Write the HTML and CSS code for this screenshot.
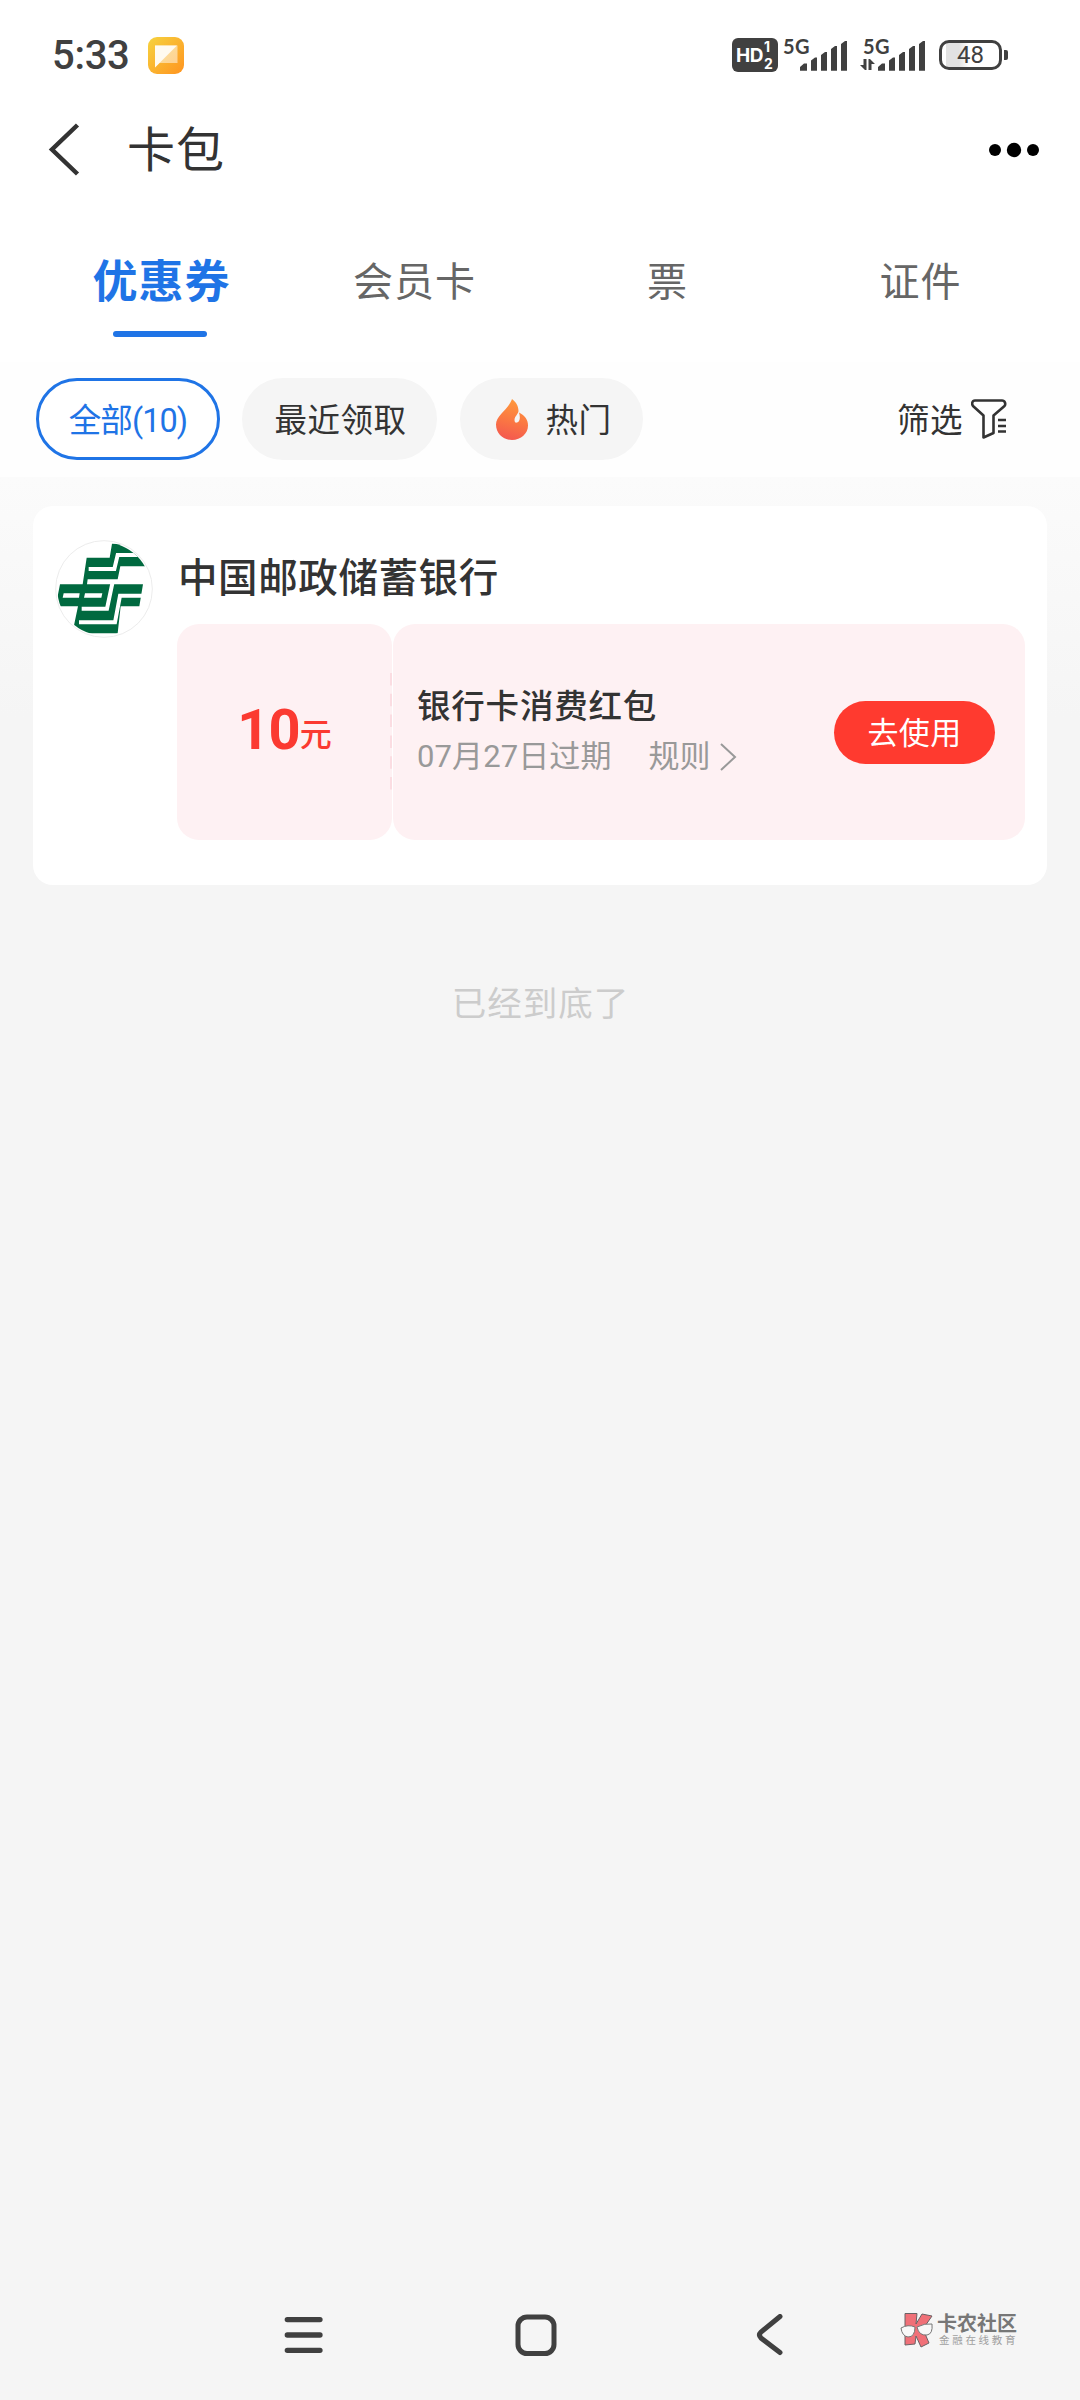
FILE: index.html
```html
<!DOCTYPE html>
<html lang="zh-CN">
<head>
<meta charset="utf-8">
<title>卡包</title>
<link rel="stylesheet" href="styles.css">
</head>
<body>
<div class="screen">
  <header class="status">
    <span class="clock">5:33</span>
    <svg class="note" width="36" height="37" viewBox="0 0 36 37">
      <defs>
        <linearGradient id="noteBg" x1="0" y1="0" x2="1" y2="1"><stop offset="0" stop-color="#f6d33f"/><stop offset="1" stop-color="#ff9420"/></linearGradient>
      </defs>
      <rect width="36" height="37" rx="9" fill="url(#noteBg)"/>
      <path d="M7 8.500H29.500V26H11.500L7 30.500Z" fill="#fff" opacity=".5"/>
      <path d="M7 8.500H29L7 30.500Z" fill="#fff" opacity=".85"/>
    </svg>
    <div class="indicators">
      <span class="hd"><b>HD</b><span class="sims"><i>1</i><i>2</i></span></span>
      <span class="signal signal-one"><span class="net">5G</span>
        <svg class="bars" width="65" height="34" viewBox="0 0 65 34" fill="#404040"><path d="M17 32.700V29l4-3.500h3v7.200zM28 32.700V22.500l4-3h2v13.200zM38 32.700V17l4-3h2v18.700zM48 32.700V11l4-3h2v24.700zM58 32.700V6l4-3h2v29.700z"/></svg>
      </span>
      <span class="signal signal-two"><span class="net">5G</span>
        <svg class="bars" width="66" height="34" viewBox="0 0 66 34" fill="#404040"><path d="M18 32.700V29l4-3.500h3v7.200zM29 32.700V22.500l4-3h2v13.200zM39 32.700V17l4-3h2v18.700zM49 32.700V11l4-3h2v24.700zM59 32.700V6l4-3h2v29.700z"/><path d="M3.500 21h3v11h-1.500L0 27h3.500zM8.500 32V21H10l5 5h-3.500v6z"/></svg>
      </span>
      <span class="battery">48</span>
    </div>
  </header>

  <nav class="titlebar">
    <svg width="36" height="54" viewBox="0 0 36 54" fill="none" stroke="#333" stroke-width="4.500"><path d="M31.500 2 6 26.500 31.500 51"/></svg>
    <h1>卡包</h1>
    <svg class="more" width="52" height="16" viewBox="0 0 52 16"><circle cx="7" cy="8" r="6"/><circle cx="26" cy="8" r="7.200"/><circle cx="45" cy="8" r="6"/></svg>
  </nav>

  <div class="tabs">
    <span class="tab active">优惠券</span>
    <span class="tab">会员卡</span>
    <span class="tab">票</span>
    <span class="tab">证件</span>
  </div>

  <div class="filters">
    <span class="chip chip-all"><span>全部(10)</span></span>
    <span class="chip chip-recent"><span>最近领取</span></span>
    <span class="chip chip-hot">
      <svg width="32" height="41" viewBox="0 0 32 41">
        <defs><linearGradient id="fire" x1=".6" y1="0" x2=".4" y2="1"><stop offset="0" stop-color="#ff9a3c"/><stop offset=".5" stop-color="#fb7a42"/><stop offset="1" stop-color="#f4584f"/></linearGradient></defs>
        <path d="M16 0c4 3 6.500 7 6.500 12 0 3-4 5-4 9 0 2 1 3 2.500 2.500 3-1 3.500-5 2-10C29 16.500 32 21 32 26.500 32 34.500 25 41 16 41S0 34.500 0 25.500C0 16 12 11 16 0z" fill="url(#fire)"/>
      </svg>
      <span>热门</span></span>
    <span class="sift"><span>筛选</span>
      <svg width="36" height="40" viewBox="0 0 36 40" fill="none" stroke="#333" stroke-width="2.600" stroke-linejoin="round"><path d="M4 1.500H31C34 1.500 35 5 33.500 7L22.500 16.500V34L12.500 38.500V16.500L2 7C.5 5 1 1.500 4 1.500Z"/><path d="M27 21H35M27 27H35M27 32.500H35"/></svg>
    </span>
  </div>

  <main class="list">
    <section class="card">
      <svg class="logo" width="98" height="98" viewBox="48 44 294 294">
        <defs><clipPath id="disc"><circle cx="195" cy="191" r="140"/></clipPath></defs>
        <circle cx="195" cy="191" r="145" fill="#fff" stroke="#ececec" stroke-width="3"/>
        <g clip-path="url(#disc)">
          <path fill="#00693f" d="M219 55H340L320 123H244L236 162H146L144 177H312L301 243H245L236 324H100L117 243H50L63 177H131L143 97H212Z"/>
          <path fill="none" stroke="#fff" stroke-width="12" d="M149 131H226L236 89H330M128 250H204L220 174M120 291H228L243 211H330"/>
          <path fill="#fff" d="M74 204H122L120 217H71ZM138 204H190L187 217H135Z"/>
        </g>
      </svg>
      <div class="body">
        <h2>中国邮政储蓄银行</h2>
        <div class="coupon">
          <div class="amount"><b>10</b><span>元</span></div>
          <div class="detail">
            <svg class="tear" width="2" height="118" viewBox="0 0 2 118"><path d="M1 0V118" stroke="#fbdde2" stroke-width="2" stroke-dasharray="12.500 8.300"/></svg>
            <div class="info">
              <strong>银行卡消费红包</strong>
              <p><span>07月27日过期</span><span class="rule">规则</span><svg width="17" height="30" viewBox="0 0 17 30" fill="none" stroke="#999" stroke-width="2"><path d="M1 2 15 15 1 28"/></svg></p>
            </div>
            <button class="use" type="button">去使用</button>
          </div>
        </div>
      </div>
    </section>
    <p class="end">已经到底了</p>
  </main>

  <footer class="sysnav">
    <svg class="key-menu" width="40" height="42" viewBox="0 0 40 42" stroke="#404040" stroke-width="5.300" stroke-linecap="round"><path d="M3.300 5.600H36M3.300 21H36M3.300 36.300H36"/></svg>
    <svg class="key-home" width="42" height="42" viewBox="0 0 42 42" fill="none" stroke="#404040" stroke-width="5"><rect x="3" y="3" width="36" height="36.500" rx="9"/></svg>
    <svg class="key-back" width="28" height="42" viewBox="0 0 28 42" fill="none" stroke="#404040" stroke-width="5" stroke-linecap="round"><path d="M24 2.500 5 18Q2 21 5 24L24 38.500"/></svg>
    <div class="brand">
      <svg width="34" height="36" viewBox="0 0 34 36">
        <path d="M5 1.500H17L16 12 22 2 32 4 23 17 29 31 21 35 16 24 15 32 5 33Z" fill="#f07078" stroke="#6b6265" stroke-width="1"/>
        <path d="M1 16Q8 12 15 15 15 25 8 25 2 24 1 16ZM17 15Q25 11 32 12 33 22 27 23 19 24 17 15Z" fill="#f8f8f8" stroke="#777" stroke-width="1"/>
      </svg>
      <div class="brand-text"><b>卡农社区</b><span>金融在线教育</span></div>
    </div>
  </footer>
</div>
</body>
</html>
```
FILE: styles.css
```css
* { box-sizing: border-box; }
body { margin: 0; font-family: Roboto, "Noto Sans CJK SC", sans-serif; color: #333; background: #f5f5f5; }
h1, h2, p { margin: 0; }
svg { display: block; flex: none; }
.screen { width: 1080px; height: 2400px; display: flex; flex-direction: column; overflow: hidden; }

.status { height: 110px; background: #fff; display: flex; align-items: center; padding: 0 78px 0 52px; color: #404040; }
.clock { font-size: 40px; line-height: 48px; padding-top: 2px; font-weight: 500; letter-spacing: -.3px; width: 96px; }
.indicators { margin-left: auto; display: flex; align-items: center; }
.hd { width: 46px; height: 34px; background: #404040; border-radius: 6px; color: #fff; display: flex; align-items: center; padding-left: 4px; font-family: Inter, sans-serif; }
.hd b { font-size: 19px; letter-spacing: -.5px; }
.sims { display: flex; flex-direction: column; margin-left: 1px; }
.sims i { font-style: normal; font-weight: 700; font-size: 14px; line-height: 17px; }
.signal { display: grid; height: 34px; margin-left: 5px; }
.signal-two { margin-left: 12px; }
.net { grid-area: 1 / 1; font: 700 20px/20px Lato, sans-serif; margin-top: -2px; letter-spacing: .5px; }
.signal-two .net { padding-left: 3px; }
.bars { grid-area: 1 / 1; }
.battery { position: relative; width: 63px; height: 30px; border: 3px solid #404040; border-radius: 10px; margin-left: 13px; font-size: 24px; line-height: 25px; text-align: center; background: linear-gradient(90deg, transparent 4px, #e2e2e2 4px, #e2e2e2 17px, transparent 27px); }
.battery::after { content: ""; position: absolute; right: -9px; top: 7px; width: 4px; height: 10px; background: #404040; border-radius: 0 2px 2px 0; }

.titlebar { height: 80px; background: #fff; display: flex; align-items: center; padding: 0 40px 0 46px; }
.titlebar h1 { font-size: 48px; line-height: 70px; padding-top: 1px; font-weight: 400; letter-spacing: 1px; margin-left: 45px; }
.more { margin-left: auto; }

.tabs { height: 172px; background: #fff; display: grid; grid-template-columns: repeat(4, 253px); padding: 59px 33px 0 35px; }
.tab { display: flex; flex-direction: column; align-items: center; font-size: 40px; line-height: 68px; letter-spacing: 1px; color: #666; }
.tab.active { color: #1f74e6; font-size: 45px; font-weight: 700; }
.tab.active::after { content: ""; width: 94px; height: 6px; margin: 14px 4px 0 0; border-radius: 3px; background: #1f74e6; }

.filters { height: 115px; background: #fefefe; display: flex; padding: 16px 73px 0 36px; }
.filters span span { padding-bottom: 4px; }
.chip { height: 82px; border-radius: 41px; background: #f5f5f5; display: flex; align-items: center; justify-content: center; font-size: 32.500px; letter-spacing: .5px; }
.chip-all { width: 184px; border: 3px solid #1f74e6; background: #fff; color: #1f74e6; letter-spacing: -.9px; }
.chip-recent { width: 195px; margin-left: 22px; padding-left: 2px; }
.chip-hot { width: 183px; margin-left: 23px; padding-left: 5px; gap: 17px; }
.sift { margin-left: auto; height: 82px; display: flex; align-items: center; gap: 8px; font-size: 32.500px; letter-spacing: .5px; }

.list { flex: 1; padding: 29px 33px 0; background: linear-gradient(#fbfbfb, #f5f5f5 240px); }
.card { height: 379px; border-radius: 20px; background: #fff; display: flex; padding: 34px 22px 0 22px; }
.body { flex: 1; margin-left: 24px; }
.body h2 { font-size: 39.500px; line-height: 70px; padding-top: 4px; font-weight: 500; letter-spacing: .6px; margin-left: 1px; height: 84px; }
.coupon { display: flex; gap: 1px; height: 216px; }
.amount { width: 215px; border-radius: 22px; background: #fef1f3; color: #fb3a31; display: flex; align-items: flex-start; justify-content: center; padding-top: 73px; }
.amount b { font-size: 56px; line-height: 67px; font-weight: 700; letter-spacing: -1px; }
.amount span { font-size: 32px; line-height: 46px; font-weight: 500; margin-top: 15px; }
.detail { flex: 1; border-radius: 22px; background: #fef1f3; display: flex; align-items: center; padding-right: 30px; }
.tear { margin: 0 0 0 -3px; }
.info { flex: 1; margin-left: 25px; }
.info strong { display: block; font-size: 33.500px; line-height: 48px; font-weight: 500; letter-spacing: .8px; }
.info p { display: flex; align-items: center; font-size: 31px; line-height: 50px; padding-top: 1px; color: #999; letter-spacing: .1px; }
.rule { margin-left: 37px; }
.info p svg { margin-left: 9px; }
.use { width: 161px; height: 63px; padding: 0 0 4px; border: 0; border-radius: 32px; background: #ff3a2f; color: #fff; font: inherit; font-size: 31px; font-weight: 400; letter-spacing: .3px; }
.end { margin-top: 94px; padding-left: 1px; text-align: center; font-size: 34.500px; line-height: 50px; letter-spacing: 1px; color: #ccc; font-weight: 400; }

.sysnav { height: 130px; background: #f5f5f5; display: flex; align-items: center; padding-left: 283.500px; }
.key-home { margin-left: 191.500px; }
.key-back { margin-left: 199px; }
.brand { margin-left: 116px; margin-top: -10px; display: flex; align-items: center; gap: 3px; }
.brand-text { display: flex; flex-direction: column; font-family: "Noto Sans CJK SC", sans-serif; }
.brand-text b { font-size: 20px; line-height: 20px; color: #777; font-weight: 700; }
.brand-text span { font-size: 10.500px; line-height: 14px; letter-spacing: 2.700px; color: #a0a0a0; margin-left: 2px; }
```
